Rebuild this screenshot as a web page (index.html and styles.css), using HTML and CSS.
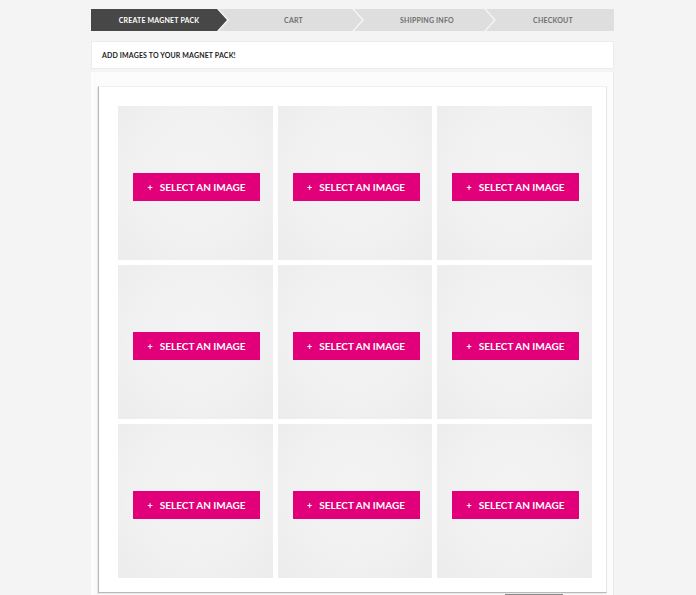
FILE: index.html
```html
<html>
<head>
<link rel="stylesheet" href="styles.css">
</head>
<body>
<div class="page">
<div class="steps">
<div class="step active">CREATE MAGNET PACK</div>
<div class="step cart">CART</div>
<div class="step shipping">SHIPPING INFO</div>
<div class="step last">CHECKOUT</div>
</div>
<div class="title-box">ADD IMAGES TO YOUR MAGNET PACK!</div>
<div class="panel">
<div class="card">
<div class="grid">
<div class="tile"><button class="select-btn"><span class="plus">+</span>SELECT AN IMAGE</button></div>
<div class="tile"><button class="select-btn"><span class="plus">+</span>SELECT AN IMAGE</button></div>
<div class="tile"><button class="select-btn"><span class="plus">+</span>SELECT AN IMAGE</button></div>
<div class="tile"><button class="select-btn"><span class="plus">+</span>SELECT AN IMAGE</button></div>
<div class="tile"><button class="select-btn"><span class="plus">+</span>SELECT AN IMAGE</button></div>
<div class="tile"><button class="select-btn"><span class="plus">+</span>SELECT AN IMAGE</button></div>
<div class="tile"><button class="select-btn"><span class="plus">+</span>SELECT AN IMAGE</button></div>
<div class="tile"><button class="select-btn"><span class="plus">+</span>SELECT AN IMAGE</button></div>
<div class="tile"><button class="select-btn"><span class="plus">+</span>SELECT AN IMAGE</button></div>
</div>
</div>
<div class="actions">
<div class="next-bar"></div>
</div>
</div>
</div>
</body>
</html>
```

FILE: styles.css
```css
body {
margin: 0;
background-color: #f4f4f4;
font-family: "Lato", "Liberation Sans", sans-serif;
}

.page {
width: 523px;
margin-left: 91px;
padding-top: 9px;
}

/* progress steps */
.steps {
display: flex;
height: 22px;
}

.step {
flex: none;
margin-right: -8px;
display: flex;
align-items: center;
justify-content: center;
padding-left: 6px;
background-color: #dedede;
color: #6f6f6f;
font-size: 7px;
font-weight: 700;
letter-spacing: 0.2px;
clip-path: polygon(0 0, calc(100% - 10px) 0, 100% 50%, calc(100% - 10px) 100%, 0 100%, 10px 50%);
}

.step.active {
width: 136px;
background-color: #474747;
color: #fff;
padding-left: 0;
clip-path: polygon(0 0, calc(100% - 10px) 0, 100% 50%, calc(100% - 10px) 100%, 0 100%);
}

.step.cart {
width: 137px;
}

.step.shipping {
width: 134px;
}

.step.last {
flex: 1;
margin-right: 0;
clip-path: polygon(0 0, 100% 0, 100% 100%, 0 100%, 10px 50%);
}

.title-box {
margin-top: 10px;
height: 28px;
box-sizing: border-box;
background-color: #fff;
border: 1px solid #ececec;
padding-left: 10px;
display: flex;
align-items: center;
font-size: 7px;
font-weight: 700;
color: #222;
letter-spacing: 0.15px;
}

.panel {
margin-top: 3px;
background-color: #fcfcfc;
border-right: 1px solid #e8e8e8;
padding: 14px 6px 0 7px;
}

.card {
background-color: #fff;
border-left: 1px solid #b9b9b9;
border-bottom: 1px solid #b9b9b9;
border-top: 1px solid #f0f0f0;
border-right: 1px solid #e6e6e6;
box-shadow: -1px 1px 1px rgba(0, 0, 0, 0.08);
padding: 19px 14px 14px 19px;
}

.grid {
display: grid;
grid-template-columns: 155px 154px 155px;
grid-auto-rows: 154px;
gap: 5px;
}

.tile {
background: radial-gradient(ellipse at 50% 45%, #f3f3f3 0%, #f1f1f1 55%, #ececec 100%);
display: flex;
align-items: center;
justify-content: center;
padding-top: 8px;
box-sizing: border-box;
}

.select-btn {
width: 127px;
height: 28px;
margin-left: 2px;
border: none;
background-color: #e1007a;
color: #fff;
font-family: "Lato", "Liberation Sans", sans-serif;
font-size: 10px;
font-weight: 700;
display: flex;
align-items: center;
justify-content: center;
padding: 0;
cursor: pointer;
}

.plus {
margin-right: 7px;
font-size: 9px;
}

.actions {
display: flex;
justify-content: flex-end;
padding-right: 44px;
}

.next-bar {
width: 58px;
height: 20px;
margin-top: 1px;
background-color: #8a8a8a;
}
```
